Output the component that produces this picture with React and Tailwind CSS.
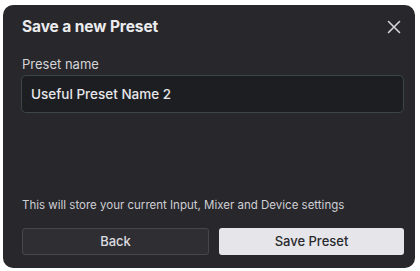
export default function App() {
  return (
    <div className="w-[420px] h-[271px] bg-white pt-[5px] pl-[3px]" style={{ fontFamily: 'Inter, "Noto Sans", sans-serif' }}>
      <div className="w-[412px] h-[263px] rounded-[10px] bg-[#28282c] flex flex-col pl-[18px] pr-[11px] pt-[9px] pb-[13px]">
        <div className="flex items-center justify-between h-[26px]">
          <div className="text-[15.5px] font-bold text-[#ececee] tracking-[-0.1px] pl-[1px]">Save a new Preset</div>
          <svg width="14" height="14" viewBox="0 0 14 14" className="mr-[3px]">
            <path d="M1.5 1.5 L12.5 12.5 M12.5 1.5 L1.5 12.5" stroke="#d6d6da" strokeWidth="1.6" strokeLinecap="round" />
          </svg>
        </div>
        <div className="mt-[16px] text-[13px] text-[#d4d4d8] leading-[16px] pl-[1px]">Preset name</div>
        <div className="mt-[3px] h-[38px] rounded-[5px] border border-[#3c4646] bg-[#1d1e21] flex items-center px-[9px]">
          <span className="text-[13.5px] text-[#e6e6ea] font-medium">Useful Preset Name 2</span>
        </div>
        <div className="flex-1" />
        <div className="text-[11.5px] text-[#cfcfd4] leading-[14px] pl-[1px]">This will store your current Input, Mixer and Device settings</div>
        <div className="mt-[16px] flex gap-[10px] pl-[1px]">
          <button className="flex-1 h-[27px] rounded-[3px] border border-[#46464c] bg-[#2f2f33] text-[13px] text-[#dcdce0] font-medium">Back</button>
          <button className="flex-1 h-[27px] rounded-[3px] bg-[#e6e6ea] text-[13px] text-[#2a2a2e] font-medium">Save Preset</button>
        </div>
      </div>
    </div>
  );
}
